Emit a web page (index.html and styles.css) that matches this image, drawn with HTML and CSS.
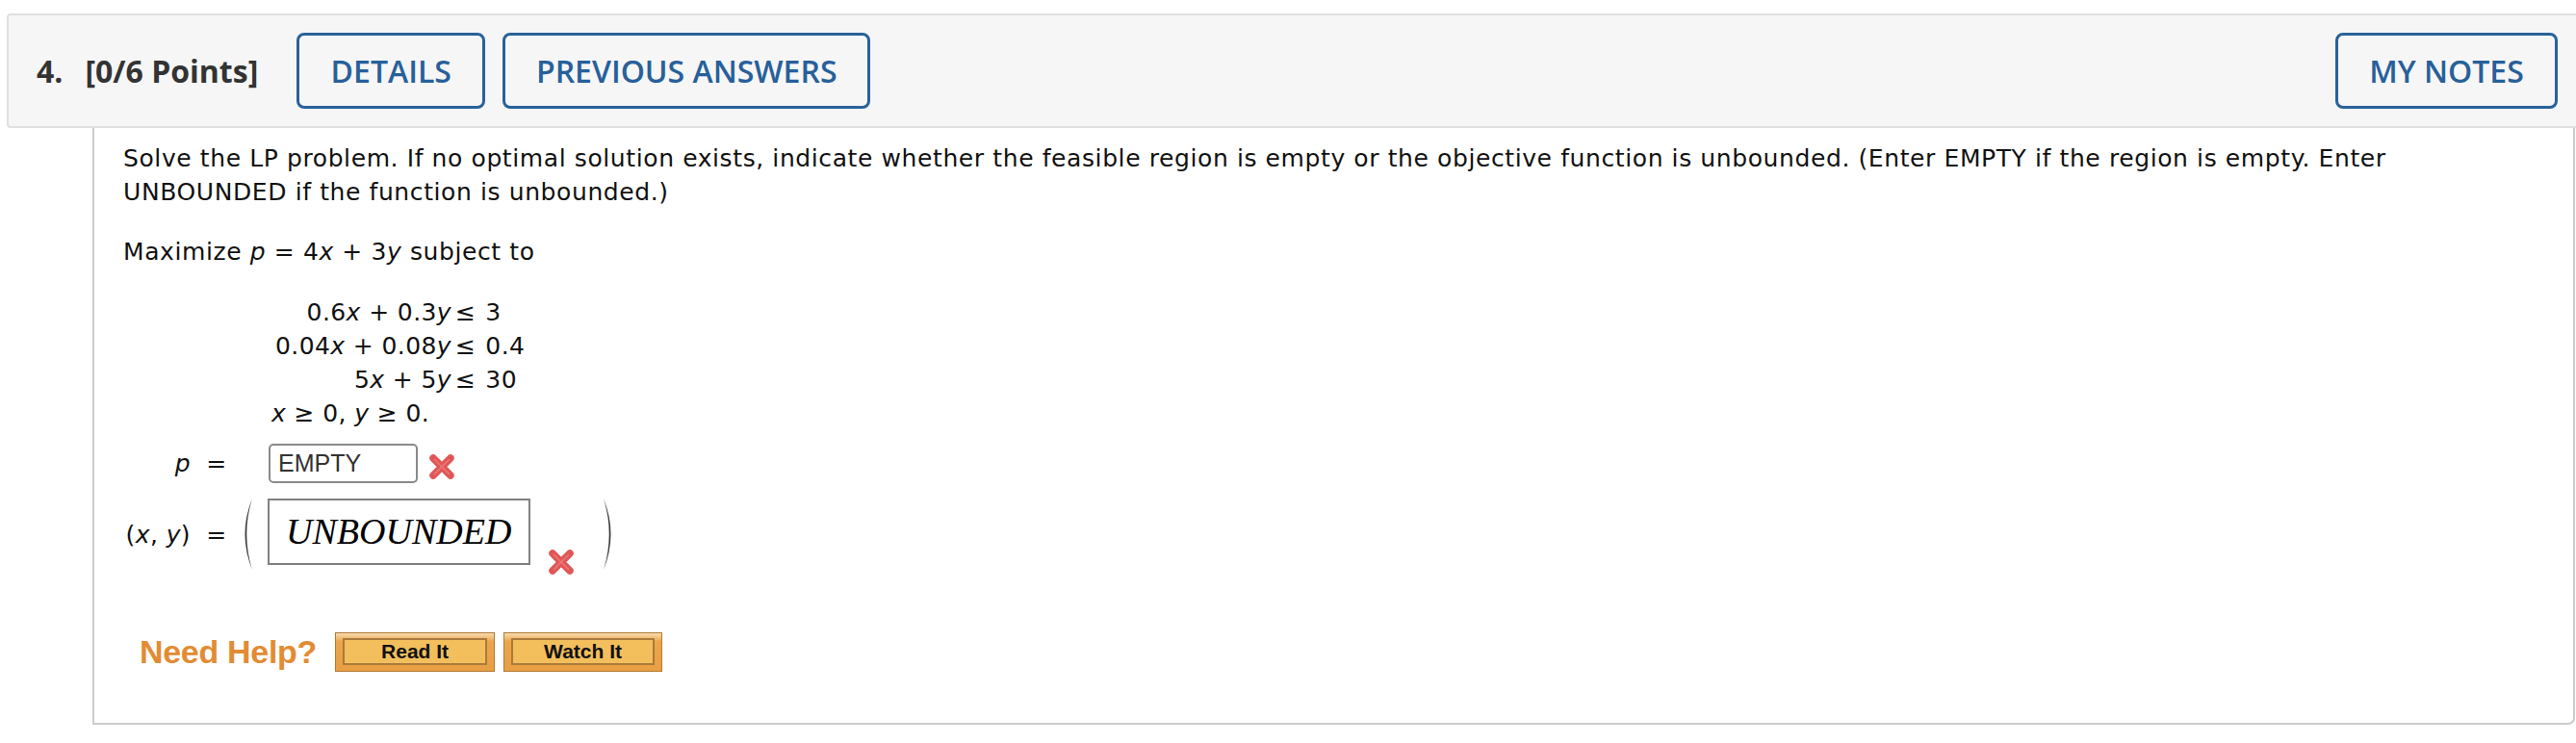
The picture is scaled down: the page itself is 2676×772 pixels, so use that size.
FILE: index.html
```html
<!DOCTYPE html>
<html lang="en">
<head>
<meta charset="utf-8">
<title>Question 4</title>
<link rel="stylesheet" href="styles.css">
</head>
<body>
<div class="question">
  <div class="q-header">
    <div class="q-label"><span class="q-num">4.</span><span>[0/6 Points]</span></div>
    <button class="hbtn details">DETAILS</button>
    <button class="hbtn prev">PREVIOUS ANSWERS</button>
    <div class="spacer"></div>
    <button class="hbtn notes">MY NOTES</button>
  </div>
  <div class="q-body">
    <p class="intro">Solve the LP problem. If no optimal solution exists, indicate whether the feasible region is empty or the objective function is unbounded. (Enter EMPTY if the region is empty. Enter UNBOUNDED if the function is unbounded.)</p>
    <p class="maxline">Maximize <i>p</i> = 4<i>x</i> + 3<i>y</i> subject to</p>
    <div class="constraints">
      <span class="lhs">0.6<i>x</i> + 0.3<i>y</i></span><span class="rel">≤</span><span class="rhs">3</span>
      <span class="lhs">0.04<i>x</i> + 0.08<i>y</i></span><span class="rel">≤</span><span class="rhs">0.4</span>
      <span class="lhs">5<i>x</i> + 5<i>y</i></span><span class="rel">≤</span><span class="rhs">30</span>
      <span class="nonneg"><i>x</i> ≥ 0, <i>y</i> ≥ 0.</span>
    </div>
    <div class="answer-row p-row">
      <span class="a-label"><i>p</i></span>
      <span class="a-eq">=</span>
      <span class="text-input">EMPTY</span>
      <svg class="xmark" width="28" height="28" viewBox="0 0 28 28"><path d="M5 5 L23 23 M23 5 L5 23" stroke="#e05656" stroke-width="7.5" stroke-linecap="round"/><path d="M6.5 6.5 L21.5 21.5 M21.5 6.5 L6.5 21.5" stroke="#ec7777" stroke-width="1.6" stroke-linecap="round"/></svg>
    </div>
    <div class="answer-row xy-row">
      <span class="a-label">(<i>x</i>, <i>y</i>)</span>
      <span class="a-eq">=</span>
      <svg class="paren" width="16" height="76" viewBox="0 0 16 76"><path d="M15 1 Q0 38 15 75 Q3.5 38 15 1 Z" fill="#3a3a3a"/></svg>
      <span class="big-input">UNBOUNDED</span>
      <svg class="xmark xmark-low" width="28" height="28" viewBox="0 0 28 28"><path d="M5 5 L23 23 M23 5 L5 23" stroke="#e05656" stroke-width="7.5" stroke-linecap="round"/><path d="M6.5 6.5 L21.5 21.5 M21.5 6.5 L6.5 21.5" stroke="#ec7777" stroke-width="1.6" stroke-linecap="round"/></svg>
      <svg class="paren paren-r" width="16" height="76" viewBox="0 0 16 76"><path d="M1 1 Q16 38 1 75 Q12.5 38 1 1 Z" fill="#3a3a3a"/></svg>
    </div>
    <div class="help-row">
      <span class="need-help">Need Help?</span>
      <button class="hlp read"><span class="hlp-inner">Read It</span></button>
      <button class="hlp watch"><span class="hlp-inner">Watch It</span></button>
    </div>
  </div>
</div>
</body>
</html>
```
FILE: styles.css
```css
html, body {
  margin: 0;
  padding: 0;
  background: #ffffff;
  overflow: hidden;
}

.question {
  margin: 14px -4px 0 7px;
}

.q-header {
  display: flex;
  align-items: center;
  height: 115px;
  padding: 0 21px 0 29px;
  background: #f6f6f6;
  border: 2px solid #e0e0e0;
  border-radius: 4px 0 0 4px;
  font-family: "Open Sans", "Liberation Sans", sans-serif;
}

.q-label {
  font-weight: 700;
  font-size: 32px;
  color: #333333;
  margin-right: 40px;
  white-space: nowrap;
}

.q-num {
  margin-right: 23px;
}

.hbtn {
  height: 79px;
  box-sizing: border-box;
  border: 3px solid #29629a;
  border-radius: 8px;
  background: transparent;
  color: #27609a;
  font-family: "Open Sans", "Liberation Sans", sans-serif;
  font-weight: 600;
  font-size: 32px;
  padding: 0;
  white-space: nowrap;
}

.details { width: 196px; }
.prev { width: 382px; margin-left: 18px; }
.notes { width: 231px; }

.spacer { flex: 1; }

.q-body {
  margin: 0 5px 0 89px;
  padding: 14px 30px 53px 30px;
  border: 2px solid #cccccc;
  border-top: none;
  border-radius: 0 0 7px 0;
  font-family: "DejaVu Sans", Verdana, sans-serif;
  font-size: 25px;
  letter-spacing: 0.6px;
  line-height: 35px;
  color: #111111;
}

.q-body p {
  margin: 0;
}

.intro {
  max-width: 2400px;
}

.maxline {
  margin-top: 27px !important;
}

.constraints {
  display: grid;
  grid-template-columns: auto auto auto;
  justify-content: start;
  margin: 28px 0 0 158px;
  letter-spacing: 0.4px;
}

.lhs { justify-self: end; }
.rel { padding: 0 10px 0 4px; }
.rhs { justify-self: start; }
.nonneg { grid-column: 1 / -1; justify-self: start; margin-left: -4px; }

.answer-row {
  display: flex;
  align-items: center;
}

.a-label {
  width: 70px;
  text-align: right;
  letter-spacing: 0.4px;
}

.a-eq {
  width: 49px;
  text-align: center;
  padding-left: 5px;
  box-sizing: border-box;
}

.p-row {
  margin-top: 14px;
  height: 41px;
}

.text-input {
  margin-left: 32px;
  width: 155px;
  height: 41px;
  box-sizing: border-box;
  border: 2px solid #8a8a8a;
  border-radius: 5px;
  padding-left: 8px;
  font-family: "Liberation Sans", Arial, sans-serif;
  font-size: 25px;
  letter-spacing: 0;
  line-height: 37px;
  color: #333333;
}

.xmark {
  margin-left: 11px;
  margin-top: 6px;
}

.xy-row {
  margin-top: 15px;
  height: 76px;
}

.paren {
  align-self: center;
}

.big-input {
  margin-left: 15px;
  width: 273px;
  height: 69px;
  box-sizing: border-box;
  border: 2px solid #808080;
  padding-left: 17px;
  font-family: "Liberation Serif", "Times New Roman", serif;
  font-style: italic;
  font-size: 38px;
  letter-spacing: 0;
  line-height: 65px;
  color: #000000;
  align-self: flex-start;
  margin-top: 1px;
  white-space: nowrap;
}

.xmark-low {
  align-self: flex-end;
  margin: 0 0 -5px 18px;
}

.paren-r {
  margin-left: 29px;
}

.help-row {
  display: flex;
  align-items: center;
  margin-top: 64px;
  padding-left: 17px;
}

.need-help {
  font-family: "Liberation Sans", Arial, sans-serif;
  font-weight: 700;
  font-size: 34px;
  letter-spacing: -0.3px;
  color: #e38b33;
  margin-right: 19px;
}

.hlp {
  height: 41px;
  box-sizing: border-box;
  padding: 5px 7px 6px 7px;
  border: 1px solid #b07a35;
  background: linear-gradient(#f9dcaf 0%, #eba54a 22%, #e99f43 100%);
  display: flex;
  align-items: stretch;
}

.read { width: 166px; }
.watch { width: 165px; margin-left: 9px; }

.hlp-inner {
  flex: 1;
  display: flex;
  align-items: center;
  justify-content: center;
  border: 2px solid #a97a3c;
  background: #f3bf5c;
  font-family: "Liberation Sans", Arial, sans-serif;
  font-weight: 700;
  font-size: 21px;
  letter-spacing: 0;
  color: #111111;
}
```
